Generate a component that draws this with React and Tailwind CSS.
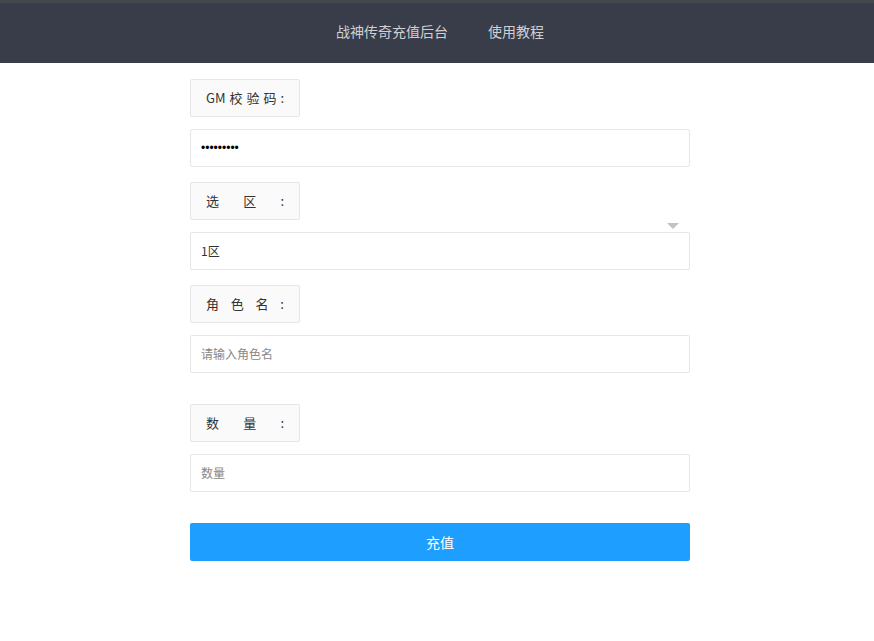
import React from 'react';

const font = { fontFamily: '"Microsoft YaHei", "Noto Sans CJK SC", "Liberation Sans", sans-serif' };

function Label({ parts }) {
    return (
        <div className="w-[110px] h-[38px] px-[15px] flex items-center justify-between bg-[#fafafa] border border-[#e6e6e6] rounded-[2px] text-[13px] text-[#333]">
            {parts.map((p, i) => (
                <span key={i}>{p}</span>
            ))}
        </div>
    );
}

function Field({ children }) {
    return (
        <div className="relative w-[500px] h-[38px] px-[10px] flex items-center bg-white border border-[#e6e6e6] rounded-[2px] text-[12px]">
            {children}
        </div>
    );
}

export default function App() {
    return (
        <div className="min-h-[641px] bg-white" style={font}>
            <div className="h-[3px] bg-[#45474f]" />
            <div className="h-[60px] pl-[6px] pb-[3px] bg-[#393d49] flex items-center justify-center gap-10 text-[14px] text-[#cfd0d3]">
                <span>战神传奇充值后台</span>
                <span>使用教程</span>
            </div>

            <div className="w-[500px] ml-[190px] pt-4 flex flex-col">
                <Label parts={['GM', '校', '验', '码', ':']} />
                <div className="mt-3">
                    <Field>
                        <span className="text-black text-[12px]" style={{ fontFamily: '"Liberation Sans", sans-serif' }}>
                            •••••••••
                        </span>
                    </Field>
                </div>

                <div className="mt-[15px]">
                    <Label parts={['选', '区', ':']} />
                </div>
                <div className="mt-3">
                    <Field>
                        <span className="text-[#333]">1区</span>
                        <span className="absolute right-[10px] -top-[10px] w-0 h-0 border-x-[6px] border-x-transparent border-t-[6px] border-t-[#c2c2c2]" />
                    </Field>
                </div>

                <div className="mt-[15px]">
                    <Label parts={['角', '色', '名', ':']} />
                </div>
                <div className="mt-3">
                    <Field>
                        <span className="text-[#888]">请输入角色名</span>
                    </Field>
                </div>

                <div className="mt-[31px]">
                    <Label parts={['数', '量', ':']} />
                </div>
                <div className="mt-3">
                    <Field>
                        <span className="text-[#888]">数量</span>
                    </Field>
                </div>

                <button className="mt-[31px] w-[500px] h-[38px] bg-[#1e9fff] text-white text-[14px] rounded-[2px]">
                    充值
                </button>
            </div>
        </div>
    );
}
